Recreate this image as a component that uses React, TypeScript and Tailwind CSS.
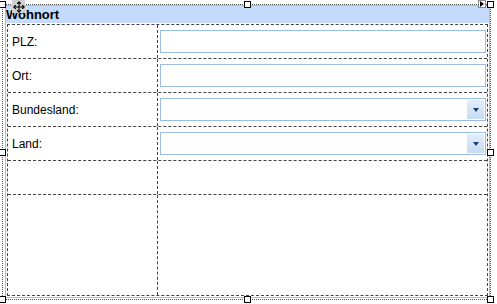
import React from "react";
import { Move } from "lucide-react";

const rows = [
  { label: "PLZ:", kind: "text" },
  { label: "Ort:", kind: "text" },
  { label: "Bundesland:", kind: "select" },
  { label: "Land:", kind: "select" },
];

function Handle({ className }: { className: string }) {
  return (
    <div
      className={`absolute w-[7px] h-[7px] bg-white border border-black ${className}`}
    />
  );
}

function Field({ kind }: { kind: string }) {
  return (
    <div className="ml-[2px] w-[326px] h-[23px] border border-[#9dbde6] bg-white flex justify-end items-center pr-[1px]">
      {kind === "select" && (
        <div className="w-[17px] h-[19px] bg-gradient-to-b from-[#e3eefc] to-[#c6daf5] flex items-center justify-center">
          <div className="w-0 h-0 border-l-[3px] border-r-[3px] border-t-[4px] border-l-transparent border-r-transparent border-t-[#1d3c78]" />
        </div>
      )}
    </div>
  );
}

export default function App() {
  return (
    <div
      className="relative w-[497px] h-[304px] bg-white overflow-hidden text-[12px] text-black"
      style={{ fontFamily: '"Liberation Sans", Arial, sans-serif' }}
    >
      {/* selection frame */}
      <div className="ml-[2px] mt-[4px] w-[489px] h-[296px] border border-dotted border-[#555] pl-[2px] pb-[1px]">
        {/* group box */}
        <div className="w-[485px] h-[293px] border border-[#9ebde8] flex flex-col">
          <div className="h-[17px] bg-[#c5dbfb] font-bold text-[13px] leading-[17px] shrink-0">
            Wohnort
          </div>
          <div className="h-[1px] shrink-0" />
          {/* table */}
          <div className="ml-[1px] w-[481px] h-[272px] border border-dashed border-[#444] flex flex-col">
            {rows.map((r) => (
              <div
                key={r.label}
                className="h-[34px] shrink-0 border-b border-dashed border-[#444] flex"
              >
                <div className="w-[150px] border-r border-dashed border-[#444] flex items-center pl-[4px]">
                  {r.label}
                </div>
                <div className="flex-1 flex items-center">
                  <Field kind={r.kind} />
                </div>
              </div>
            ))}
            <div className="h-[34px] shrink-0 border-b border-dashed border-[#444] flex">
              <div className="w-[150px] border-r border-dashed border-[#444]" />
              <div className="flex-1" />
            </div>
            <div className="flex-1 flex">
              <div className="w-[150px] border-r border-dashed border-[#444]" />
              <div className="flex-1" />
            </div>
          </div>
        </div>
      </div>

      {/* move grip */}
      <div className="absolute left-[12px] top-0 w-[13px] h-[13px] bg-[#cfcfcf] flex items-center justify-center">
        <Move size={12} strokeWidth={2.2} color="#000" />
      </div>
      {/* top right arrow tab */}
      <div className="absolute left-[478px] top-0 w-[8px] h-[8px] bg-white border border-[#888] flex items-center justify-center">
        <div className="w-0 h-0 border-t-[3px] border-b-[3px] border-l-[4px] border-t-transparent border-b-transparent border-l-black" />
      </div>

      {/* sizing handles */}
      <Handle className="left-[-1px] top-[1px]" />
      <Handle className="left-[244px] top-[1px]" />
      <Handle className="left-[487px] top-[1px]" />
      <Handle className="left-[-1px] top-[149px]" />
      <Handle className="left-[487px] top-[149px]" />
      <Handle className="left-[-1px] top-[296px]" />
      <Handle className="left-[244px] top-[296px]" />
      <Handle className="left-[487px] top-[296px]" />
    </div>
  );
}
